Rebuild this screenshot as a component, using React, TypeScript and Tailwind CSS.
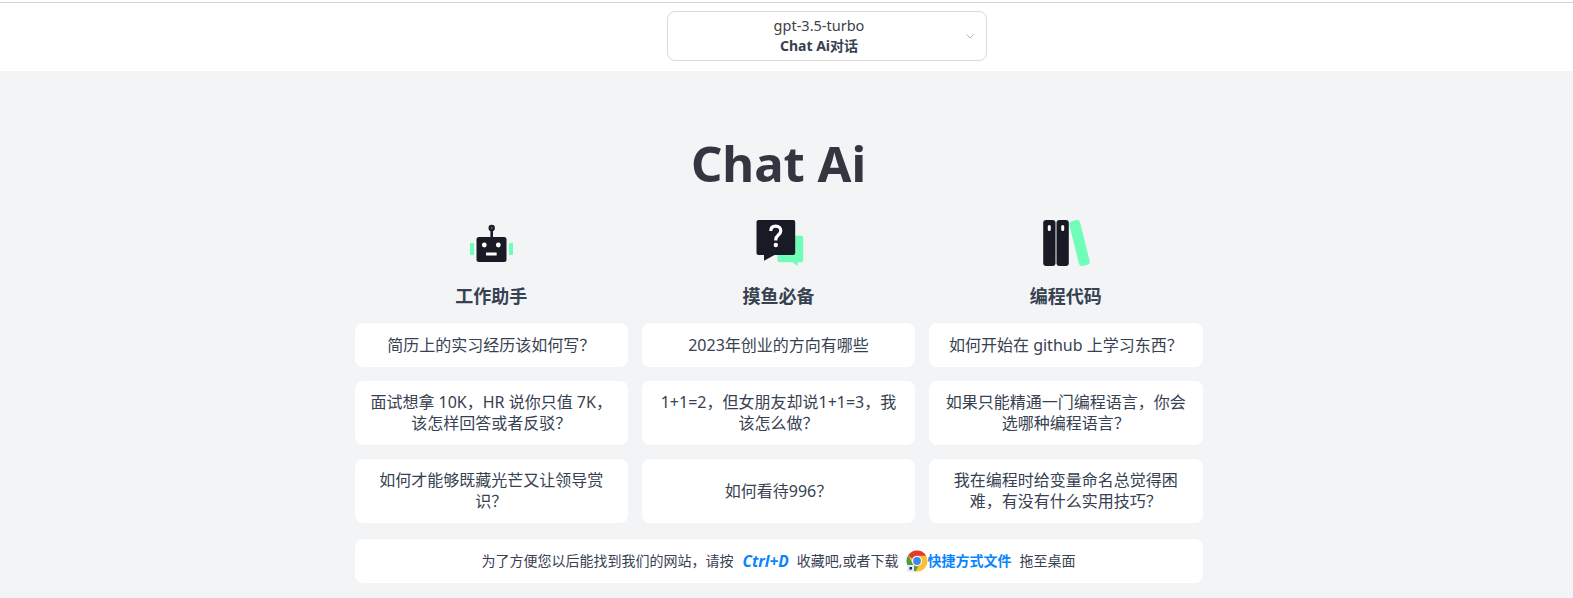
import React from 'react';

const columns = [
  {
    title: '工作助手',
    icon: 'robot',
    items: ['简历上的实习经历该如何写？', '面试想拿 10K，HR 说你只值 7K，该怎样回答或者反驳？', '如何才能够既藏光芒又让领导赏识？'],
  },
  {
    title: '摸鱼必备',
    icon: 'question',
    items: ['2023年创业的方向有哪些', '1+1=2，但女朋友却说1+1=3，我该怎么做？', '如何看待996？'],
  },
  {
    title: '编程代码',
    icon: 'books',
    items: ['如何开始在 github 上学习东西？', '如果只能精通一门编程语言，你会选哪种编程语言？', '我在编程时给变量命名总觉得困难，有没有什么实用技巧？'],
  },
];

const RobotIcon = () => (
  <svg width="48" height="48" viewBox="0 0 48 48">
    <rect x="3" y="24" width="4" height="12" rx="1" fill="#6ffdb8" />
    <rect x="42" y="24" width="4" height="12" rx="1" fill="#6ffdb8" />
    <rect x="23.400" y="10" width="2.600" height="9" fill="#181a25" />
    <circle cx="24.700" cy="9" r="3.200" fill="#181a25" />
    <circle cx="24.700" cy="9" r="0.800" fill="#9a9ca5" />
    <rect x="9.500" y="18" width="30" height="25" rx="2.500" fill="#181a25" />
    <circle cx="17.300" cy="26" r="2.400" fill="#fff" />
    <circle cx="31.300" cy="26" r="2.400" fill="#fff" />
    <rect x="19" y="33.500" width="10.700" height="3" rx="0.600" fill="#fff" />
  </svg>
);

const QuestionIcon = () => (
  <svg width="52" height="50" viewBox="0 0 52 50">
    <path d="M24.500 17.700h21.700a2 2 0 0 1 2 2v22.600a2 2 0 0 1-2 2h-3.500l-.2 3.700-5-3.700H24.500a2 2 0 0 1-2-2V19.700a2 2 0 0 1 2-2z" fill="#6ffdb8" />
    <path d="M3.500 2h34.700a2 2 0 0 1 2 2v31a2 2 0 0 1-2 2H19.500l-10.500 5.700V37H3.500a2 2 0 0 1-2-2V4a2 2 0 0 1 2-2z" fill="#181a25" />
    <path d="M15.800 13c0-3 2-4.800 5-4.800s5 1.800 5 4.500c0 4.200-5 4.400-5 8.800v1" fill="none" stroke="#fff" strokeWidth="3.200" />
    <circle cx="20.800" cy="27" r="2.200" fill="#fff" />
  </svg>
);

const BooksIcon = () => (
  <svg width="50" height="48" viewBox="0 0 50 48">
    <rect x="2.200" y="1" width="12.300" height="46" rx="3" fill="#181a25" />
    <rect x="15.500" y="1" width="12.300" height="46" rx="3" fill="#181a25" />
    <rect x="6.800" y="6" width="3" height="6" rx="1.500" fill="#fff" />
    <rect x="20.200" y="6" width="3" height="6" rx="1.500" fill="#fff" />
    <rect x="33" y="1" width="11" height="46" rx="3" fill="#6ffdb8" transform="rotate(-14 38.500 24)" />
  </svg>
);

const ChromeIcon = () => (
  <svg width="22" height="22" viewBox="0 0 22 22">
    <circle cx="11" cy="11" r="10.500" fill="#fbc02d" />
    <path d="M11 .5a10.500 10.500 0 0 1 9.100 5.250H11a5.250 5.250 0 0 0-4.800 3.100L2.300 5.200A10.500 10.500 0 0 1 11 .5z" fill="#e53935" />
    <path d="M2.300 5.200 6.500 13.700a5.250 5.250 0 0 0 5.800 2.600L9.500 21.400A10.500 10.500 0 0 1 2.300 5.200z" fill="#43a047" />
    <circle cx="11" cy="11" r="5" fill="#fff" />
    <circle cx="11" cy="11" r="3.900" fill="#4285f4" />
    <rect x="1" y="15" width="7" height="7" fill="#e8eaf6" />
    <path d="M3 17h3v3L5 19l-1 1-1-1 1-1z" fill="#1a237e" />
  </svg>
);

const icons: Record<string, React.ReactNode> = {
  robot: <RobotIcon />,
  question: <div className="translate-x-[3px]"><QuestionIcon /></div>,
  books: <BooksIcon />,
};

export default function App() {
  return (
    <div className="h-[598px] overflow-hidden bg-[#f3f4f6] text-[#374151] font-['Noto_Sans','Noto_Sans_CJK_SC',sans-serif]">
      <div className="h-[3px] border-b border-[#d4d4d4] bg-white" />
      <header className="flex h-[68px] items-start justify-center bg-white pt-[8px]">
        <div className="relative ml-[81px] flex h-[50px] w-[320px] flex-col items-center justify-center rounded-lg border border-[#d9d9d9] bg-white pr-4 pb-[1px] leading-5">
          <span className="text-[14.5px] leading-[21px] text-[#3f3f46]">gpt-3.5-turbo</span>
          <span className="text-sm font-bold text-[#374151]">Chat Ai对话</span>
          <svg className="absolute right-[12px] top-[22px]" width="8" height="5" viewBox="0 0 8 5" fill="none" stroke="#b8b8b8" strokeWidth="1">
            <path d="M.5.500 4 4 7.500.500" />
          </svg>
        </div>
      </header>

      <div className="w-[1557px]">
        <main className="mx-auto flex w-[848px] flex-col items-stretch">
          <h1 className="mt-[53px] h-[78px] text-center text-[49px] font-bold leading-[78px] text-[#343541]">Chat Ai</h1>
          <div className="mt-[16px] grid grid-cols-3 gap-x-[14px]">
            {columns.map((col) => (
              <section key={col.title} className="flex flex-col items-center">
                <div className="flex h-[50px] items-center justify-center">{icons[col.icon]}</div>
                <h2 className="mt-[14px] h-[28px] text-lg font-bold leading-7">{col.title}</h2>
                <div className="mt-[13px] flex w-full flex-col gap-[14px]">
                  {col.items.map((item, i) => (
                    <div
                      key={item}
                      className={`flex items-center justify-center rounded-lg bg-white px-[15px] text-center text-base leading-[21px] ${i === 0 ? 'h-[44px]' : 'h-[64px]'}`}
                    >
                      {item}
                    </div>
                  ))}
                </div>
              </section>
            ))}
          </div>
          <div className="mt-[16px] flex h-[44px] items-center justify-center rounded-lg bg-white text-sm text-[#374151]">
            <span>为了方便您以后能找到我们的网站，请按</span>
            <b className="ml-[9px] mr-[8px] text-[15.5px] italic text-[#0a84ff]">Ctrl+D</b>
            <span>收藏吧,或者下载</span>
            <span className="ml-[7px]"><ChromeIcon /></span>
            <b className="text-[#0a84ff]">快捷方式文件</b>
            <span className="ml-[8px]">拖至桌面</span>
          </div>
        </main>
      </div>
    </div>
  );
}
